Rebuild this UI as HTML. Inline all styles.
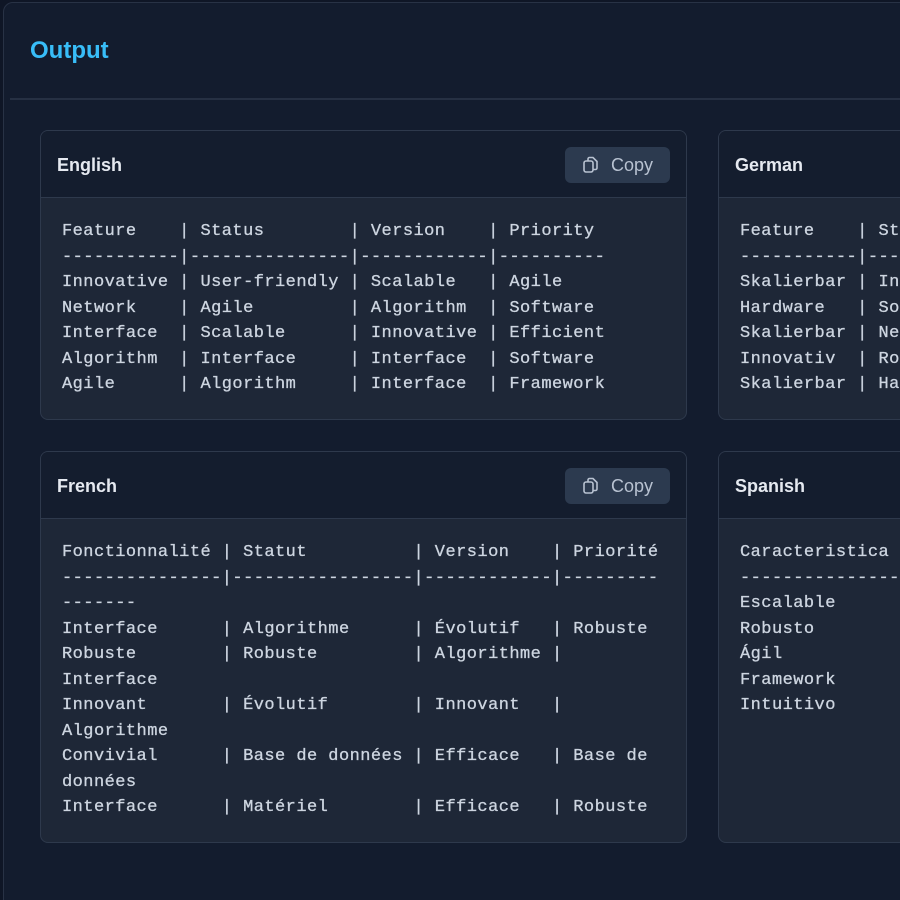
<!DOCTYPE html>
<html><head><meta charset="utf-8"><style>
*{margin:0;padding:0;box-sizing:border-box}
html,body{width:900px;height:900px;overflow:hidden;background:#0f1626}
.wrap{position:relative;width:900px;height:900px;overflow:hidden}
.panel{position:absolute;left:3px;top:2px;width:960px;height:960px;background:#131c2e;border:1px solid #283245;border-radius:10px}
.title{position:absolute;left:30px;top:37px;font:bold 24px "Liberation Sans",sans-serif;color:#38bdf8}
.div{position:absolute;left:10px;top:98px;width:950px;height:2px;background:#263043}
.card{position:absolute;border:1px solid #2e394c;border-radius:8px;background:#1e2737;overflow:hidden}
.hd{height:67px;background:#141d2e;border-bottom:1px solid #2e394c;position:relative}
.hd span{position:absolute;left:16px;top:24px;font:bold 18px "Liberation Sans",sans-serif;color:#e5e9f0}
.btn{position:absolute;left:524px;top:16px;width:105px;height:36px;background:#2c3a4f;border-radius:6px;color:#b8c2d1;font:18px "Liberation Sans",sans-serif}
.btn svg{position:absolute;left:17px;top:9px}
.btn b{position:absolute;left:46px;top:8px;font-weight:normal}
pre{padding:21px 0 0 21px;font:17px/25.5px "Liberation Mono",monospace;letter-spacing:0.45px;color:#cdd5e0;white-space:pre;-webkit-text-stroke:0.3px #cdd5e0}
</style></head><body><div class="wrap">
<div class="panel"></div>
<div class="title">Output</div>
<div class="div"></div>

<div class="card" style="left:40px;top:130px;width:647px;height:290px">
<div class="hd"><span>English</span><div class="btn"><svg width="18" height="18" viewBox="0 0 18 18" fill="none" stroke="#b8c2d1" stroke-width="1.6"><rect x="2" y="5" width="9" height="11" rx="2"/><path d="M6 5V3a1.5 1.5 0 0 1 1.5-1.5H11l4 4V12a1.5 1.5 0 0 1-1.5 1.5H11"/></svg><b>Copy</b></div></div>
<pre>Feature    | Status        | Version    | Priority
-----------|---------------|------------|----------
Innovative | User-friendly | Scalable   | Agile
Network    | Agile         | Algorithm  | Software
Interface  | Scalable      | Innovative | Efficient
Algorithm  | Interface     | Interface  | Software
Agile      | Algorithm     | Interface  | Framework</pre>
</div>

<div class="card" style="left:718px;top:130px;width:400px;height:290px">
<div class="hd"><span>German</span></div>
<pre>Feature    | Status
-----------|-----------
Skalierbar | Innovativ
Hardware   | Software
Skalierbar | Netzwerk
Innovativ  | Robust
Skalierbar | Hardware</pre>
</div>

<div class="card" style="left:40px;top:451px;width:647px;height:392px">
<div class="hd"><span>French</span><div class="btn"><svg width="18" height="18" viewBox="0 0 18 18" fill="none" stroke="#b8c2d1" stroke-width="1.6"><rect x="2" y="5" width="9" height="11" rx="2"/><path d="M6 5V3a1.5 1.5 0 0 1 1.5-1.5H11l4 4V12a1.5 1.5 0 0 1-1.5 1.5H11"/></svg><b>Copy</b></div></div>
<pre>Fonctionnalité | Statut          | Version    | Priorité
---------------|-----------------|------------|---------
-------
Interface      | Algorithme      | Évolutif   | Robuste
Robuste        | Robuste         | Algorithme |
Interface
Innovant       | Évolutif        | Innovant   |
Algorithme
Convivial      | Base de données | Efficace   | Base de
données
Interface      | Matériel        | Efficace   | Robuste</pre>
</div>

<div class="card" style="left:718px;top:451px;width:400px;height:392px">
<div class="hd"><span>Spanish</span></div>
<pre>Caracteristica | Estado
---------------|--------
Escalable      | Robusto
Robusto        | Ágil
Ágil           | Escalable
Framework      | Robusto
Intuitivo      | Ágil</pre>
</div>
</div></body></html>
